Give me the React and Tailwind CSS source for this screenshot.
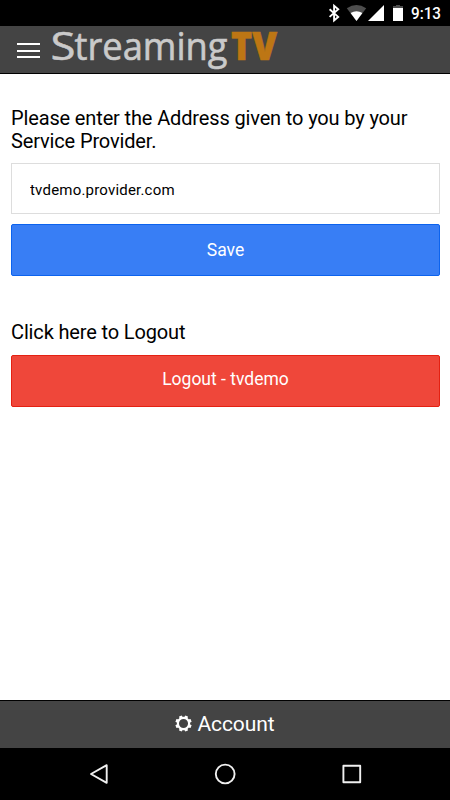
import React, { useState } from 'react';

function StatusBar() {
  return (
    <div className="flex-none h-[26px] bg-black text-white">
      <svg className="block w-full h-full" viewBox="0 0 450 26" fill="none">
        <path d="M329.6 9.3l8.6 7.6-4.1 3.6V5.8l4.1 3.5-8.6 7.6" stroke="#fff" strokeWidth="1.9" />
        <path d="M346.8 8.3Q356.5 1.6 366.2 8.3L356.5 21z" fill="#4d4d4d" />
        <path d="M350.6 13.1Q356.5 9.4 362.4 13.1L356.5 21z" fill="#fff" />
        <path d="M384 5v16h-16z" fill="#fff" />
        <path d="M393 6h3V5h4v1h3v3h-10z" fill="#4d4d4d" />
        <path d="M393 8h10v13h-10z" fill="#fff" />
        <text x="411" y="19" textLength="30" lengthAdjust="spacingAndGlyphs" fill="#fff" className="font-['Roboto',sans-serif] text-[16px] font-medium">9:13</text>
      </svg>
    </div>
  );
}

function Logo() {
  return (
    <svg className="block w-[230px] h-[46px] overflow-visible" viewBox="0 0 230 46">
      <text x="-0.5" y="34.3" textLength="25" lengthAdjust="spacingAndGlyphs" fill="#cacaca" stroke="#cacaca" strokeWidth="0.5" className="font-['Open_Sans',sans-serif] text-[38px]">S</text>
      <text x="23.5" y="34.3" textLength="153" lengthAdjust="spacingAndGlyphs" fill="#cacaca" stroke="#cacaca" strokeWidth="0.6" className="font-['Open_Sans',sans-serif] text-[38px]">treaming</text>
      <text x="180" y="34.3" textLength="46" lengthAdjust="spacingAndGlyphs" fill="#bd7614" stroke="#bd7614" strokeWidth="0.6" className="font-['Open_Sans',sans-serif] text-[38px] font-extrabold">TV</text>
    </svg>
  );
}

function GearIcon() {
  const teeth = [0, 45, 90, 135, 180, 225, 270, 315];
  return (
    <svg className="w-[17px] h-[17px]" viewBox="0 0 17 17" fill="none">
      <circle cx="8.5" cy="8.5" r="5.6" stroke="#fff" strokeWidth="2.1" />
      {teeth.map((angle) => (
        <path key={angle} d="M6.6 2.8L7.1.3h2.8l.5 2.5z" fill="#fff" transform={`rotate(${angle + 22.5} 8.5 8.5)`} />
      ))}
    </svg>
  );
}

function App() {
  const [address, setAddress] = useState('tvdemo.provider.com');

  return (
    <div className="flex flex-col h-screen w-full bg-white overflow-hidden font-['Roboto',sans-serif] text-black">
      <StatusBar />

      <header className="flex-none h-12 flex items-start bg-[#444] border-b border-black">
        <button aria-label="Menu" className="flex flex-col gap-[4.5px] ml-[17px] mt-[17px] w-[23px]">
          <span className="block w-full h-[2px] bg-white"></span>
          <span className="block w-full h-[2px] bg-white"></span>
          <span className="block w-full h-[2px] bg-white"></span>
        </button>
        <div className="ml-[11px]">
          <Logo />
        </div>
      </header>

      <main className="flex-1 pl-[11px] pr-[10px] pt-[33px]">
        <p className="text-[20px] leading-[23px] tracking-[-0.14px]">Please enter the Address given to you by your Service Provider.</p>
        <input
          value={address}
          onChange={(e) => setAddress(e.target.value)}
          className="block w-full h-[51px] mt-[10px] pl-[18px] pt-[2px] border border-[#ddd] text-[15px] tracking-[0.2px] outline-none"
        />
        <button className="block w-full h-[52px] mt-[10px] rounded-[2px] border border-[#0c63ee] bg-[#387ef5] text-[17.5px] text-white">Save</button>

        <p className="mt-[45px] text-[20px] leading-[23px] tracking-[-0.14px]">Click here to Logout</p>
        <button className="block w-full h-[52px] mt-[11px] pb-[3px] rounded-[2px] border border-[#e42112] bg-[#ef473a] text-[17.5px] text-white">Logout - tvdemo</button>
      </main>

      <footer className="flex-none h-12 flex items-center justify-center gap-[5px] pb-[2px] bg-[#444] border-t border-black text-white">
        <GearIcon />
        <span className="text-[21px] leading-6 tracking-[-0.1px]">Account</span>
      </footer>

      {/* Android navigation keys */}
      <div className="flex-none h-[52px] bg-black">
        <svg className="block w-full h-full" viewBox="0 0 450 52" fill="none" stroke="#f0f0f0" strokeWidth="1.9" strokeLinejoin="round">
          <path d="M106.7 17.2v17.6L91 26z" />
          <circle cx="225.2" cy="26" r="9.4" />
          <path d="M343.4 17.8h16.8v16.4h-16.8z" />
        </svg>
      </div>
    </div>
  );
}

export default App;
